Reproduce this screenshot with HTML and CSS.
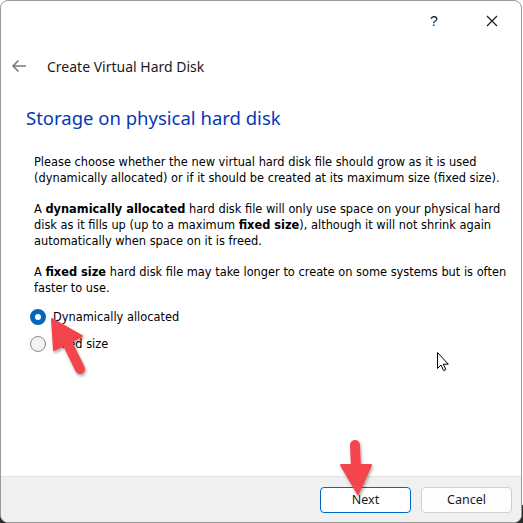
FILE: index.html
```html
<!DOCTYPE html>
<html>
<head>
<meta charset="utf-8">
<link rel="stylesheet" href="styles.css">
</head>
<body>
<div class="window">
  <div class="titlebar">
    <span class="tb-btn help">?</span>
    <span class="tb-btn close">
      <svg width="12" height="12" viewBox="0 0 12 12"><path d="M1 1L11 11M11 1L1 11" stroke="#1a1a1a" stroke-width="1.2"/></svg>
    </span>
  </div>
  <div class="nav">
    <svg class="back" width="16" height="14" viewBox="0 0 16 14"><path d="M15 7H2M7.5 1.5L2 7l5.5 5.5" fill="none" stroke="#7a7a7a" stroke-width="1.6"/></svg>
    <span class="nav-title">Create Virtual Hard Disk</span>
  </div>
  <h1 class="page-title">Storage on physical hard disk</h1>
  <div class="body">
    <p>Please choose whether the new virtual hard disk file should grow as it is used (dynamically allocated) or if it should be created at its maximum size (fixed size).</p>
    <p>A <b>dynamically allocated</b> hard disk file will only use space on your physical hard disk as it fills up (up to a maximum <b>fixed size</b>), although it will not shrink again automatically when space on it is freed.</p>
    <p>A <b>fixed size</b> hard disk file may take longer to create on some systems but is often faster to use.</p>
    <div class="radios">
      <label class="radio"><span class="dot checked"></span><span>Dynamically allocated</span></label>
      <label class="radio"><span class="dot"></span><span>Fixed size</span></label>
    </div>
  </div>
  <div class="spacer"></div>
  <div class="footer">
    <button class="btn primary">Next</button>
    <button class="btn">Cancel</button>
  </div>
</div>
<svg class="overlay" width="523" height="523" viewBox="0 0 523 523">
  <defs>
    <filter id="sh" x="-50%" y="-50%" width="200%" height="200%">
      <feDropShadow dx="1" dy="2" stdDeviation="1.5" flood-color="#000" flood-opacity="0.35"/>
    </filter>
  </defs>
  <g filter="url(#sh)" fill="#f4444e" stroke="#f4444e" stroke-linejoin="round">
    <line x1="80" y1="369" x2="64" y2="336" stroke-width="10" stroke-linecap="round"/>
    <polygon points="52,319 54,350 82,336" stroke-width="2"/>
    <line x1="355" y1="445" x2="356" y2="468" stroke-width="10" stroke-linecap="round"/>
    <polygon points="341,465 371,465 358,494" stroke-width="2"/>
  </g>
  <path d="M437.5 352.5v16l3.5-3.5 2.6 5.6 2.2-1-2.5-5.4h5z" fill="#fff" stroke="#000" stroke-width="1"/>
</svg>
</body>
</html>
```
FILE: styles.css
```css
html, body {
  margin: 0;
  padding: 0;
}
body {
  width: 523px;
  height: 523px;
  overflow: hidden;
  background: linear-gradient(#ffffff 0 505px, #2a2a2a 505px);
  position: relative;
  font-family: "Noto Sans", "Open Sans", sans-serif;
}
.window {
  box-sizing: border-box;
  width: 522px;
  height: 523px;
  border: 1px solid #9a9a9a;
  border-radius: 8px;
  background: #fff;
  display: flex;
  flex-direction: column;
  overflow: hidden;
}
.titlebar {
  height: 40px;
  display: flex;
  justify-content: flex-end;
  align-items: center;
  padding-right: 6px;
}
.tb-btn {
  width: 46px;
  height: 32px;
  display: flex;
  align-items: center;
  justify-content: center;
  color: #1a1a1a;
}
.help {
  font-family: "Liberation Sans", sans-serif;
  font-size: 14px;
  margin-right: 12px;
}
.nav {
  height: 40px;
  display: flex;
  align-items: center;
  padding-left: 10px;
  margin-top: 5px;
}
.back {
  margin-right: 20px;
}
.nav-title {
  font-size: 14px;
  color: #1a1a1a;
}
.page-title {
  margin: 19px 0 0 25px;
  font-weight: normal;
  font-size: 18.5px;
  color: #0539b8;
  line-height: 26px;
}
.body {
  padding: 0 10px 0 33px;
  margin-top: 23px;
  font-family: "DejaVu Sans", sans-serif;
  font-size: 11.4px;
  line-height: 16px;
  color: #000;
}
.body p {
  margin: 0 0 15px 0;
}
.body b {
  font-weight: bold;
}
.radios {
  margin-top: -2px;
  margin-left: -4px;
  display: flex;
  flex-direction: column;
  gap: 11px;
}
.radio {
  display: flex;
  align-items: center;
  gap: 7px;
  height: 16px;
}
.dot {
  box-sizing: border-box;
  width: 16px;
  height: 16px;
  border-radius: 50%;
  border: 1px solid #8a8a8a;
  background: #f3f3f3;
}
.dot.checked {
  border: 5px solid #0067c0;
  background: #fff;
}
.spacer {
  flex: 1;
}
.footer {
  height: 45px;
  background: #f0f0f0;
  border-top: 1px solid #e0e0e0;
  display: flex;
  justify-content: flex-end;
  align-items: center;
  gap: 10px;
  padding-right: 9px;
}
.btn {
  box-sizing: border-box;
  width: 91px;
  height: 26px;
  border: 1px solid #d0d0d0;
  border-radius: 4px;
  background: #fdfdfd;
  font-family: "Noto Sans", sans-serif;
  font-size: 12.5px;
  color: #1a1a1a;
  padding: 0;
}
.btn.primary {
  border-color: #0067c0;
  background: #fff;
}
.overlay {
  position: absolute;
  left: 0;
  top: 0;
  pointer-events: none;
}
```
